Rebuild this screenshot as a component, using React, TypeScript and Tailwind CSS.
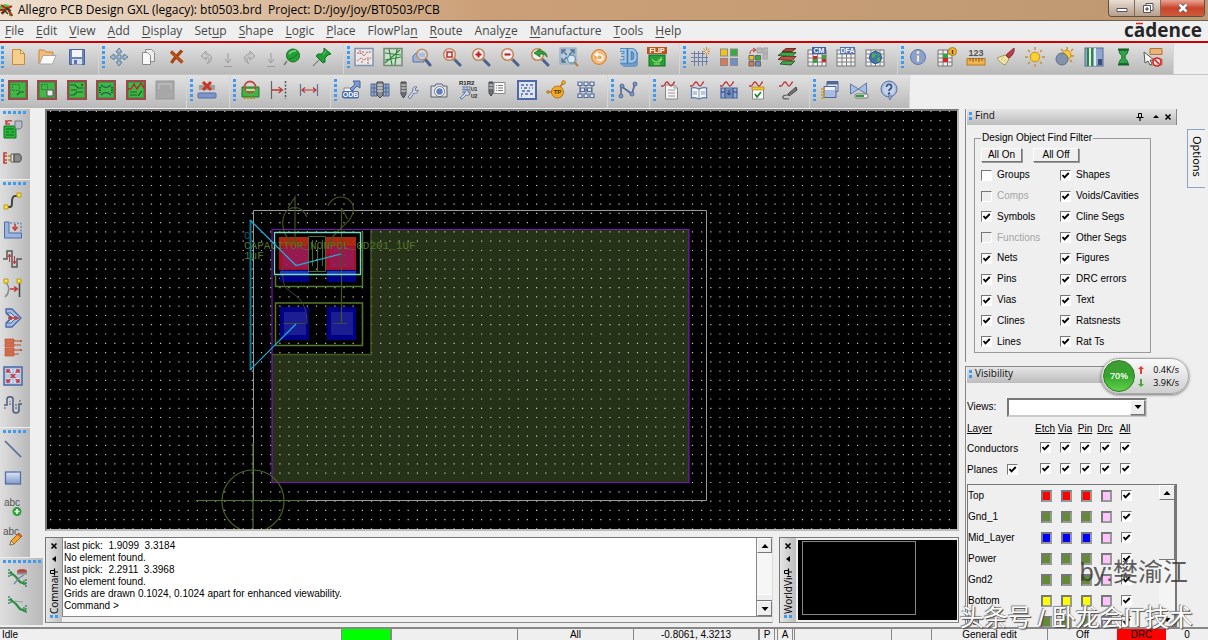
import React from 'react';

type Kids = { children?: React.ReactNode };

const Svg = ({ children }: Kids) => (
  <svg viewBox="0 0 20 20" className="size-5 shrink-0" fill="none" aria-hidden="true">
    {children}
  </svg>
);

/* ---------- shared icon parts ---------- */

const Board = ({ children }: Kids) => (
  <Svg>
    <rect x="1" y="1" width="18" height="18" fill="#44b649" stroke="#9a4a4a" strokeWidth="2" />
    <rect x="2.5" y="2.5" width="15" height="15" stroke="#2e8b34" strokeWidth=".6" />
    {children}
  </Svg>
);

const Lens = ({ children }: Kids) => (
  <Svg>
    <path d="M12 12l6 6" stroke="#4a6292" strokeWidth="3" strokeLinecap="round" />
    <path d="M11 11l2 2" stroke="#c07838" strokeWidth="2" />
    <circle cx="7.5" cy="7.5" r="5.8" fill="#eceff4" stroke="#c58a5c" strokeWidth="1.6" />
    {children}
  </Svg>
);

const Sheet = ({ children }: Kids) => (
  <Svg>
    <rect x="1" y="3" width="18" height="16" fill="#f2f2f2" stroke="#777" />
    <path d="M1 7h18M1 11h18M1 15h18M6 3v16M10.500 3v16M15 3v16" stroke="#808080" />
    {children}
  </Svg>
);

const Wave = ({ children }: Kids) => (
  <Svg>
    {children}
    <path d="M1 6h2c2 0 2-4 4-4s2 4 4 4 2-4 4-4" stroke="#bb3a3a" strokeWidth="1.3" />
  </Svg>
);

const icons: Record<string, React.ReactNode> = {
  New: (
    <Svg>
      <path d="M4.500 2.500h8l4 4v11h-12z" fill="#f6cf8e" stroke="#c88a3c" />
      <path d="M12.500 2.500v4h4z" fill="#fff1d0" stroke="#c88a3c" />
    </Svg>
  ),
  Open: (
    <Svg>
      <path d="M2 17V3h5l2 2h7v4" fill="#f3bb76" stroke="#c98540" />
      <path d="M2.500 17L6 8.500h13L15.500 17z" fill="#fafafa" stroke="#a8a8a8" />
    </Svg>
  ),
  Save: (
    <Svg>
      <path d="M2.500 2.500h15v15h-15z" fill="#6a84bd" stroke="#4c6398" />
      <rect x="5" y="3" width="10" height="7" fill="#f4f4f4" />
      <rect x="5" y="12" width="10" height="5.500" fill="#d8dde8" />
      <path d="M7 13h3v4H7z" fill="#5a72a8" />
    </Svg>
  ),
  Move: (
    <Svg>
      <path d="M10 1l3 4h-2v4h4V7l4 3-4 3v-2h-4v4h2l-3 4-3-4h2v-4H5v2l-4-3 4-3v2h4V5H7z" fill="#a9bfd3" stroke="#60809d" />
    </Svg>
  ),
  Copy: (
    <Svg>
      <path d="M7.500 2.500h6l3 3v9h-9z" fill="#eee" stroke="#8a8a8a" />
      <path d="M4.500 5.500h5l3 3v9h-8z" fill="#f8f8f8" stroke="#8a8a8a" />
    </Svg>
  ),
  Delete: (
    <Svg>
      <path d="M4 4.500c3 3 8 8 11.500 11M15 3.500C12 7 7 11 4.500 16" stroke="#a84411" strokeWidth="3.200" />
      <path d="M4.500 5c3 3 7 7 10.500 10" stroke="#d8682a" />
    </Svg>
  ),
  Undo: (
    <Svg>
      <path d="M9 4L4 9l5 4v-2.500c4 0 4 3 1 6 6-2 6-9.500-1-9.500z" fill="#c9c9c9" stroke="#9b9b9b" />
    </Svg>
  ),
  Redo: (
    <Svg>
      <path d="M11 4l5 5-5 4v-2.500c-4 0-4 3-1 6-6-2-6-9.500 1-9.500z" fill="#c9c9c9" stroke="#9b9b9b" />
    </Svg>
  ),
  Step: (
    <svg viewBox="0 0 10 20" className="h-5 w-[10px] shrink-0" fill="none" aria-hidden="true">
      <path d="M5 6v9M2 12l3 4 3-4M1 19.500h8" stroke="#9d9d9d" />
    </svg>
  ),
  Ball: (
    <Svg>
      <path d="M5 14l-3 4" stroke="#777" strokeWidth="1.500" />
      <circle cx="11" cy="8.500" r="6.500" fill="#23a036" stroke="#166f24" />
      <path d="M7 7c2-3 5-3 7-3.500" stroke="#7fd485" strokeWidth="1.600" />
      <path d="M6.500 12c4 0 6-2 9-5" stroke="#157322" />
    </Svg>
  ),
  Pin: (
    <Svg>
      <path d="M7 13l-6 6" stroke="#8a8a8a" strokeWidth="1.500" />
      <path d="M12 1l7 6-3 1-3 3 0 4-2 1-7-7 2-2h4l2-3z" fill="#1fa037" stroke="#12701f" />
      <path d="M11 8l3-4" stroke="#7ad387" />
    </Svg>
  ),
  Ratsnest: (
    <Svg>
      <rect x="1" y="1.500" width="18" height="17" fill="#e9e9e9" stroke="#8393ad" strokeWidth="1.500" />
      <path d="M3 6h4l3 3 3-4h4M3 14l4-3 3 2 3-2h4M6 3v4M14 12v5M9 4v3M8 14v3" stroke="#b95454" strokeDasharray="2 1" />
    </Svg>
  ),
  Unrats: (
    <Svg>
      <rect x="1" y="1.500" width="18" height="17" fill="#cfdccf" stroke="#768a76" strokeWidth="1.500" />
      <path d="M2 6l16 2M2 13l16-3M6 2l3 16M14 2l-2 16M2 16l15-13" stroke="#2d8c3a" strokeWidth="1.200" />
    </Svg>
  ),
  ZoomWindow: (
    <Svg>
      <path d="M13 12l5 6" stroke="#4a6292" strokeWidth="3" strokeLinecap="round" />
      <path d="M1 15V9l3-3h8v9z" fill="#9db4da" stroke="#56729f" />
      <circle cx="10" cy="7.500" r="5.300" fill="#cfdaec" fillOpacity=".9" stroke="#c58a5c" strokeWidth="1.500" />
      <path d="M7 6h6v4H7z" fill="#a9bfe2" />
    </Svg>
  ),
  ZoomFit: (
    <Lens>
      <rect x="5" y="5" width="5" height="5" stroke="#c22b2b" strokeWidth="1.500" />
    </Lens>
  ),
  ZoomIn: (
    <Lens>
      <path d="M4.500 7.500h6M7.500 4.500v6" stroke="#c4161c" strokeWidth="2" />
    </Lens>
  ),
  ZoomOut: (
    <Lens>
      <path d="M4.500 7.500h6" stroke="#c4161c" strokeWidth="2" />
    </Lens>
  ),
  ZoomPrevious: (
    <Lens>
      <path d="M4 6l6-4v2c4 0 7 2 7 6-2-3-4-3-7-3v3z" fill="#2fa23b" stroke="#1a7425" strokeWidth=".8" />
    </Lens>
  ),
  ZoomArea: (
    <Svg>
      <rect x="1" y="1" width="16" height="16" fill="#b9cad8" stroke="#8da5ba" />
      <path d="M3 3l5 5M15 3l-5 5M3 15l5-5M3 7V3h4M11 3h4v4M3 11v4h4" stroke="#4e7397" strokeWidth="1.400" />
      <path d="M15 15l4 4" stroke="#c07838" strokeWidth="2" />
      <circle cx="12.500" cy="12" r="4" fill="#dbe8f2" stroke="#6b94b5" strokeWidth="1.300" />
    </Svg>
  ),
  Refresh: (
    <Svg>
      <circle cx="10" cy="10" r="7.500" fill="#f3a85a" stroke="#d8873b" />
      <circle cx="10" cy="10" r="5.500" stroke="#fbe0bd" strokeWidth=".8" />
      <path d="M8 7.500h3.500a3 3 0 1 1-3.500 4" stroke="#fff" strokeWidth="1.800" />
      <path d="M9 4.500v6L5 7.500z" fill="#fff" />
    </Svg>
  ),
  View3D: (
    <Svg>
      <path d="M16 2l4 4v12l-2 2H6l-4-3z" fill="#6f9cc6" />
      <path d="M2 3h5.500v5H3M7.500 8v6.500H2M11.500 3v11.500h2c3 0 4-2.500 4-5.500s-1-6-4-6z" stroke="#467aab" strokeWidth="4" />
      <path d="M2 3h5.500v5H3M7.500 8v6.500H2M11.500 3v11.500h2c3 0 4-2.500 4-5.500s-1-6-4-6z" stroke="#a3c7e8" strokeWidth="2.400" />
    </Svg>
  ),
  Flip: (
    <Svg>
      <rect x="2" y="8" width="16" height="11" fill="#23a336" stroke="#176b22" />
      <path d="M5 12c2 4 8 4 10 0M14 10v3h-3M7 17h6" stroke="#c4e08b" />
      <rect x="0" y="0" width="20" height="7" fill="#b9541a" />
      <text x="10" y="6" fontSize="7" fontWeight="700" textAnchor="middle" fill="#fff" fontFamily="Liberation Sans, sans-serif">FLIP</text>
    </Svg>
  ),
  Grid: (
    <Svg>
      <path d="M1 6.500h14M1 10.500h17M1 14.500h17M4.500 4v15M8.500 4v15M12.500 4v15M16.500 9v9" stroke="#6a7fae" />
      <path d="M16.500 0v3M16.500 6v3M12 4.500h3M18 4.500h2M13.500 1.500l2 2M19.500 1.500l-2 2M13.500 7.500l2-2M19.500 7.500l-2-2" stroke="#cc8a2c" />
    </Svg>
  ),
  Colors: (
    <Svg>
      <rect x="1.500" y="2" width="7" height="7" fill="#f1c515" stroke="#8a8a8a" />
      <rect x="11.500" y="2" width="7" height="7" fill="#35ae3e" stroke="#8a8a8a" />
      <rect x="1.500" y="11.500" width="7" height="7" fill="#d87a54" stroke="#8a8a8a" />
      <rect x="11.500" y="11.500" width="7" height="7" fill="#6f8fc6" stroke="#8a8a8a" />
    </Svg>
  ),
  Shadow: (
    <Svg>
      <path d="M9 1h5v5H9zM15 1h5v5h-5zM15 7h5v5h-5z" fill="#b7b7b7" stroke="#a2a2a2" />
      <path d="M2 7c0-4 2-4 5-4M5 1l3 2-3 2" stroke="#c22b2b" />
      <path d="M1 8.500h5v4.500H1z" fill="#f1c515" stroke="#666" />
      <path d="M7.500 8.500h5v4.500h-5z" fill="#35ae3e" stroke="#666" />
      <path d="M1 14.500h5V19H1z" fill="#d87a54" stroke="#666" />
      <path d="M7.500 14.500h5V19h-5z" fill="#6f8fc6" stroke="#666" />
    </Svg>
  ),
  Layers: (
    <Svg>
      <path d="M3 17l3-3h12l-4 4z" fill="#3fa648" stroke="#2c5d30" />
      <path d="M1 12.500l4-3h14l-4 4z" fill="#c65142" stroke="#713027" />
      <path d="M1 8.500l4-3h14l-4 4z" fill="#3fa648" stroke="#2c5d30" />
      <path d="M5 4.500l4-3h10l-4 3z" fill="#a84637" stroke="#713027" />
    </Svg>
  ),
  Constraints: (
    <Sheet>
      <path d="M5 0h14v7H5z" fill="#3f61a0" />
      <path d="M6 9h4v3H6zM15 12h4v3h-4z" fill="#d9252a" />
      <path d="M6 12h4v4H6zM15 8h4v4h-4z" fill="#33a53f" />
      <text x="12" y="6" fontSize="7" fontWeight="700" textAnchor="middle" fill="#fff" fontFamily="Liberation Sans, sans-serif">CM</text>
    </Sheet>
  ),
  Dfa: (
    <Sheet>
      <path d="M4 0h15v7H4z" fill="#5271a9" />
      <text x="11.500" y="6" fontSize="7" fontWeight="700" textAnchor="middle" fill="#fff" fontFamily="Liberation Sans, sans-serif">DFA</text>
    </Sheet>
  ),
  Web: (
    <Sheet>
      <circle cx="10.500" cy="10.500" r="6" fill="#4474b0" stroke="#2e5486" />
      <path d="M7 6l4 1-1 3-3 1zM12 11l3-1v4l-3 1zM12 6l3 2-2 1z" fill="#49b34c" />
    </Sheet>
  ),
  Info: (
    <Svg>
      <circle cx="10" cy="10" r="7.500" fill="#8ba0cf" stroke="#6078ac" />
      <path d="M10 8.500v6" stroke="#f8efb5" strokeWidth="2.200" />
      <circle cx="10" cy="5.500" r="1.400" fill="#f8efb5" />
    </Svg>
  ),
  SheetInfo: (
    <Svg>
      <path d="M1 3h14v16H1z" fill="#eee" stroke="#777" />
      <path d="M1 7h14M1 11h14M1 15h14M6 3v16M10.500 3v16" stroke="#777" />
      <path d="M6 7h5v4H6z" fill="#33a53f" />
      <path d="M6 11h5v4H6z" fill="#d9252a" />
      <circle cx="15.500" cy="4.500" r="4" fill="#f2b52a" stroke="#b27a12" />
      <path d="M15.500 3v4" stroke="#573b06" strokeWidth="1.400" />
    </Svg>
  ),
  Measure: (
    <Svg>
      <text x="10" y="9" fontSize="9" fontWeight="700" textAnchor="middle" fill="#555" fontFamily="Liberation Sans, sans-serif">123</text>
      <rect x="1" y="11.500" width="18" height="6.500" fill="#f0b34f" stroke="#b87b25" />
      <path d="M4 11v3M7 11v4M10 11v3M13 11v4M16 11v3" stroke="#8a5a17" />
    </Svg>
  ),
  Brush: (
    <Svg>
      <path d="M18 1l-8 7 3 3c3-2 6-6 5-10z" fill="#c23a4c" stroke="#8f2836" />
      <path d="M9 8l4 4-4 6c-3-1-6-4-8-7z" fill="#f3e9ae" stroke="#a59457" />
      <path d="M5 13l3-3M7 15l3-3" stroke="#c9b873" />
    </Svg>
  ),
  Sun: (
    <Svg>
      <path d="M10 0v3M10 17v3M0 10h3M17 10h3M3 3l2 2M15 15l2 2M17 3l-2 2M5 15l-2 2" stroke="#c98a3a" strokeWidth="1.300" />
      <circle cx="10" cy="10" r="4.800" fill="#fbd12f" stroke="#cf8a1d" />
    </Svg>
  ),
  Dim: (
    <Svg>
      <path d="M13 0v3M19 2l-2 2M20 9h-3M7 2l2 2M18 15l-2-2" stroke="#d48a1f" strokeWidth="1.500" />
      <circle cx="12.500" cy="8" r="4.500" fill="#fbd12f" stroke="#cf8a1d" />
      <circle cx="8" cy="12" r="6" fill="#8393ab" stroke="#5f708b" />
    </Svg>
  ),
  Panels: (
    <Svg>
      <rect x="1" y="1" width="18" height="18" fill="#8fa6cf" stroke="#566c96" />
      <path d="M4 1v18M8 1v18" stroke="#2c8b3a" strokeWidth="2" />
      <path d="M6 1v18M11 1v18" stroke="#fff" strokeWidth="1.500" />
      <path d="M14 12h4v6h-4z" fill="#3a4f7a" />
    </Svg>
  ),
  Hourglass: (
    <Svg>
      <path d="M5 2.500h11M5 17.500h11" stroke="#185f28" strokeWidth="2" />
      <path d="M6 3.500h9c0 4-3 4-3 6.500s3 3 3 6.500H6c0-3.500 3-4 3-6.500S6 7.500 6 3.500z" fill="#2fa349" stroke="#19702c" />
    </Svg>
  ),
  NoSelect: (
    <Svg>
      <path d="M7 1.500h12v6H7zM7 12h12v6H7z" fill="#e9b277" stroke="#b1763a" />
      <path d="M1 5l1 11 3-2 2 4 2-1-2-4h4z" fill="#fff" stroke="#555" />
      <circle cx="14" cy="15" r="4" fill="#f7dede" stroke="#d9252a" strokeWidth="1.600" />
      <path d="M11.500 12.500l5 5" stroke="#d9252a" strokeWidth="1.600" />
    </Svg>
  ),
  Etch: (
    <Board>
      <rect x="4.500" y="4.500" width="7" height="6" stroke="#1d7a28" strokeDasharray="1.500 1" />
      <path d="M9 15l3-3h4" stroke="#14601e" strokeWidth="1.200" />
    </Board>
  ),
  Placement: (
    <Board>
      <rect x="4.500" y="4.500" width="6" height="5" stroke="#1d7a28" strokeDasharray="1.500 1" />
      <path d="M10 10h6v6h-6z" fill="#e8e8f0" stroke="#555" />
    </Board>
  ),
  Routes: (
    <Board>
      <path d="M3 5h5l3 3h5M4 10h6M3 15h4l3-3h6" stroke="#14601e" strokeWidth="1.200" />
      <circle cx="15" cy="5" r="1" fill="#14501a" />
    </Board>
  ),
  Swap: (
    <Board>
      <path d="M5 5c3 3 7 3 10 0M5 15c3-3 7-3 10 0" stroke="#1d5f5a" strokeWidth="1.300" />
      <path d="M4 7v6M16 7v6" stroke="#14601e" strokeWidth="2" strokeDasharray="1.500 1" />
    </Board>
  ),
  Signal: (
    <Board>
      <path d="M2 9l3 0 3-5 3 5 4-6 3 5" stroke="#b22a2a" strokeWidth="1.400" />
      <path d="M4 12h7M4 15h7M12 16l3-4 1-1" stroke="#14601e" strokeWidth="1.200" />
    </Board>
  ),
  Blank: (
    <Svg>
      <rect x="1" y="1" width="18" height="18" fill="#a7a7a7" stroke="#999" />
      <path d="M4 9V4h12v5" stroke="#bdbdbd" strokeWidth="1.300" />
    </Svg>
  ),
  Unplace: (
    <Svg>
      <path d="M2 5h16v5H2z" fill="#9f9f9f" />
      <path d="M6 2l8 8M14 2l-8 8" stroke="#c83526" strokeWidth="3" />
      <rect x="1" y="13" width="18" height="5" rx="1" fill="#7d95ca" stroke="#556da3" />
    </Svg>
  ),
  Outline: (
    <Svg>
      <path d="M2 7h17v10H2z" fill="#3db443" stroke="#25752b" />
      <path d="M5 17v2M8 17v2M11 17v2M14 17v2" stroke="#b38c23" strokeWidth="2" />
      <circle cx="10" cy="7" r="5.500" stroke="#c04b41" strokeWidth="1.800" />
      <path d="M6 10h9" stroke="#ecefb5" strokeWidth="1.500" />
    </Svg>
  ),
  AlignTo: (
    <Svg>
      <path d="M2.500 1v18" stroke="#666" strokeWidth="1.200" />
      <path d="M16.500 1v18" stroke="#555" strokeDasharray="2 1.500" strokeWidth="1.500" />
      <path d="M3 10h9M9.500 7l4 3-4 3" stroke="#bf3530" strokeWidth="1.300" />
    </Svg>
  ),
  Dimension: (
    <Svg>
      <path d="M1.500 4v12M18.500 4v12" stroke="#62769c" strokeWidth="1.300" />
      <path d="M3 10h14M6 7.500L3 10l3 2.500M14 7.500l3 2.500-3 2.500" stroke="#bf3530" strokeWidth="1.200" />
    </Svg>
  ),
  Odb: (
    <Svg>
      <path d="M3 8h9v7H3z" fill="#f4f4f4" stroke="#888" />
      <path d="M9 9l5-5-2-3h7v7l-3-2-5 5z" fill="#7d9bd0" stroke="#4a6596" />
      <rect x="1" y="11" width="17" height="7.500" rx="2" fill="#486bab" />
      <text x="9.500" y="17.200" fontSize="7" fontWeight="700" textAnchor="middle" fill="#fff" fontFamily="Liberation Sans, sans-serif">ODB</text>
    </Svg>
  ),
  Table: (
    <Svg>
      <path d="M1 4h6v12H1zM13 4h6v12h-6z" fill="#93a9d2" stroke="#52698f" />
      <path d="M1 8h18M1 12h18M4 4v12M16 4v12" stroke="#52698f" />
      <path d="M7 2h6v13l-3 3-3-3z" fill="#8a8f97" stroke="#444" />
      <path d="M7 5h6M7 8h6M7 11h6" stroke="#ddd" />
    </Svg>
  ),
  DrillTool: (
    <Svg>
      <path d="M2 2h5v12l-2.500 4L2 14z" fill="#6b7078" stroke="#444" />
      <path d="M2 5h5M2 8h5M2 11h5" stroke="#ddd" />
      <path d="M9 17l5-6c-1-3 1-5 4-4l-2 2 1 2 2-1c0 3-2 4-4 3l-4 6z" fill="#d5dce8" stroke="#67799c" />
    </Svg>
  ),
  Camera: (
    <Svg>
      <path d="M2 6h4l1-2h6l1 2h4v11H2z" fill="#dcdfe6" stroke="#5a5f6b" />
      <circle cx="10.500" cy="11.500" r="4" fill="#5f7fb6" stroke="#fff" strokeWidth="1.500" />
      <circle cx="10.500" cy="11.500" r="5" stroke="#555" strokeWidth=".7" />
    </Svg>
  ),
  Rename: (
    <Svg>
      <path d="M4 7h8M4 9.500h8M4 12h8M6 6v8M9 6v8M12 6v8" stroke="#7087b5" />
      <path d="M2 18l5-5c0-2 1-3 3-3v2l2 2c-1 2-3 1-4 1l-4 4z" fill="#d5dce8" stroke="#67799c" />
      <text x="1" y="5" fontSize="6" fontWeight="700" fill="#222" fontFamily="Liberation Sans, sans-serif">R1R2</text>
      <text x="13" y="11" fontSize="5" fontWeight="700" fill="#222" fontFamily="Liberation Sans, sans-serif">U1</text>
      <text x="13" y="18" fontSize="5" fontWeight="700" fill="#222" fontFamily="Liberation Sans, sans-serif">U2</text>
    </Svg>
  ),
  DrillList: (
    <Svg>
      <path d="M2 2h4v11l-2 3-2-3z" fill="#6b7078" stroke="#444" />
      <path d="M2 5h4M2 8h4" stroke="#ddd" />
      <path d="M7 2.500h11v11H7z" fill="#fafafa" stroke="#888" />
      <path d="M9 5.500h1M11 5.500h5M9 8h1M11 8h5M9 10.500h1M11 10.500h5" stroke="#777" />
    </Svg>
  ),
  Pattern: (
    <Svg>
      <rect x="1" y="1" width="18" height="18" fill="#dfe5f1" stroke="#4e69a6" strokeWidth="2" />
      <path d="M4 5h3M9 5h2M13 5h3M4 8h1M7 8h3M12 8h1M15 8h1M5 11h3M10 11h3M4 14h2M8 14h3M13 14h3M4 16h1" stroke="#4e69a6" strokeWidth="1.600" />
    </Svg>
  ),
  TestPoint: (
    <Svg>
      <path d="M1 12h5M14 7l3-4" stroke="#ae7719" strokeWidth="1.500" />
      <circle cx="17.500" cy="2.500" r="1.800" fill="#f5b62c" stroke="#ae7719" />
      <circle cx="2" cy="12" r="1.300" fill="#f5b62c" stroke="#ae7719" />
      <circle cx="11.500" cy="12" r="6" fill="#f2a92b" stroke="#b37416" />
      <text x="11.500" y="14" fontSize="6" fontWeight="700" textAnchor="middle" fill="#4d3000" fontFamily="Liberation Sans, sans-serif">TP</text>
    </Svg>
  ),
  Array: (
    <Svg>
      <path d="M4 4v12M10 4v12M16 4v12M4 10h12" stroke="#556c99" />
      <path d="M2 2h4v3.500H2zM8 2h4v3.500H8zM14 2h4v3.500h-4zM4.500 8h4v3.500h-4zM11.500 8h4v3.500h-4zM2 14h4v3.500H2zM8 14h4v3.500H8zM14 14h4v3.500h-4z" fill="#e4e9f3" stroke="#556c99" strokeWidth="1.200" />
    </Svg>
  ),
  Net: (
    <Svg>
      <path d="M3 16V6l11 8 3-11" stroke="#566c98" strokeWidth="1.700" />
      <circle cx="3" cy="16" r="2" fill="#7e97c6" stroke="#566c98" />
      <circle cx="4" cy="6" r="2" fill="#7e97c6" stroke="#566c98" />
      <circle cx="14" cy="14" r="2" fill="#7e97c6" stroke="#566c98" />
      <circle cx="17" cy="4" r="2" fill="#7e97c6" stroke="#566c98" />
    </Svg>
  ),
  WavePage: (
    <Wave>
      <path d="M5.500 5h9l3 3v11h-12z" fill="#f3f3f3" stroke="#888" />
      <path d="M8 10h7M8 13h7M8 16h7M14 5v3h3" stroke="#999" />
    </Wave>
  ),
  WaveBook: (
    <Wave>
      <path d="M2.500 8c3-1 5 0 7.500 1 2.500-1 5-2 7.500-1v10c-3-1-5 0-7.500 1-2.500-1-5-2-7.500-1z" fill="#f7f9fd" stroke="#5c78ad" strokeWidth="1.300" />
      <path d="M10 9v10M12 12h4M12 14h4M4 12h4M4 14h4" stroke="#5c78ad" strokeWidth=".8" />
    </Wave>
  ),
  WaveCase: (
    <Wave>
      <path d="M2 8h16v10H2z" fill="#93aad6" stroke="#46619a" strokeWidth="1.200" />
      <path d="M7 9h6v8H7z" fill="#7089bd" />
      <path d="M10 10v5M8 13l2 2 2-2M2 12h4M14 12h4M6 8v10M14 8v10" stroke="#274074" />
    </Wave>
  ),
  WaveNote: (
    <Wave>
      <path d="M4.500 8h11v11h-11z" fill="#fff" stroke="#888" />
      <path d="M4 7h12v3H4z" fill="#f2c52f" stroke="#a9811a" strokeWidth=".7" />
      <path d="M7 14l2 3 4-5" stroke="#1f8a30" strokeWidth="1.700" />
    </Wave>
  ),
  WaveProbe: (
    <Wave>
      <path d="M18 7l-8 7 1 2 8-6z" fill="#777" stroke="#444" />
      <path d="M10 15c-4 0-6 1-5 3s4 0 6 1" stroke="#555" strokeWidth="1.200" />
    </Wave>
  ),
  Windows: (
    <Svg>
      <path d="M7 1.500h11v10H7z" fill="#dfe7f5" stroke="#4e6799" />
      <path d="M7 1.500h11v3H7z" fill="#4e6799" />
      <path d="M4 6.500h12v11H4z" fill="#a8bcdf" stroke="#4e6799" />
      <path d="M5 7h10v3H5z" fill="#eef2f9" />
      <path d="M1 9h4M1 12h4M1 15h4M1 18h4" stroke="#c9a022" strokeWidth="1.500" />
    </Svg>
  ),
  Mirror: (
    <Svg>
      <path d="M1.500 4v10l8-5zM17.500 3v11l-8-5z" fill="#a9bfe2" stroke="#5c78ad" />
      <rect x="6" y="14" width="13" height="4" rx="1" fill="#eee" stroke="#777" />
      <path d="M7 16h8" stroke="#2da53d" strokeWidth="2" />
    </Svg>
  ),
  Help: (
    <Svg>
      <circle cx="10" cy="9" r="8" fill="#aabbdc" stroke="#5f77a8" />
      <path d="M9 16h4l-2 4z" fill="#aabbdc" stroke="#5f77a8" />
      <circle cx="10" cy="9" r="6" fill="#c7d3ea" />
      <path d="M7.500 7c0-4 5.500-3 5 0 0 2-2.500 2-2.500 4" stroke="#3b5484" strokeWidth="1.800" />
      <circle cx="10" cy="13.500" r="1.200" fill="#3b5484" />
    </Svg>
  ),
  PlaceBoard: (
    <Svg>
      <path d="M1 7h12v12H1z" fill="#27b638" stroke="#13742c" />
      <path d="M3 10h8M3 13h3M8 13h3M3 16h8" stroke="#0f6b1f" />
      <path d="M3 5c0-3 3-4 6-3M3 1v4h4" stroke="#c04040" strokeWidth="1.400" />
      <path d="M12 2h7v6l-2 2h-4l-1-2z" fill="#b5bcc8" stroke="#6e7683" />
    </Svg>
  ),
  Plug: (
    <Svg>
      <path d="M4 5H1v10h3M1 8h3M1 12h3" stroke="#c2403d" strokeWidth="1.600" />
      <path d="M5 8h5M5 12h5" stroke="#c7a31c" strokeWidth="2" />
      <path d="M8 6h3v8H8z" fill="#ddd" stroke="#666" />
      <path d="M11 6h5c3 0 3 8 0 8h-5z" fill="#8a8a8a" stroke="#444" />
    </Svg>
  ),
  Connect: (
    <Svg>
      <path d="M4 16h3c2 0 2-2 2-5s0-6 3-6h3" stroke="#454545" strokeWidth="2" />
      <path d="M1 14h4v4H1zM14 2h4v4h-4z" fill="#ffe23c" stroke="#b79b14" />
    </Svg>
  ),
  Slide: (
    <Svg>
      <path d="M1.500 2v16h17v-5H6V2z" fill="#9cb4dd" stroke="#4e6ca6" />
      <path d="M7 3h11v9" stroke="#4e6ca6" strokeDasharray="2 1.500" />
      <path d="M12 4v4M9.500 7l2.500 3 2.500-3" stroke="#c23434" strokeWidth="1.500" />
    </Svg>
  ),
  Delay: (
    <Svg>
      <path d="M0 10h4V2h5v16h5v-8h5" stroke="#585858" strokeWidth="1.500" />
      <path d="M6.500 13V6M5 8l1.500-3L8 8M11.500 7v7M10 12l1.500 3 1.500-3" stroke="#c23434" />
    </Svg>
  ),
  Vertex: (
    <Svg>
      <path d="M2 4c5 4 5 10 0 15" stroke="#888" strokeWidth="1.500" />
      <path d="M16.500 4v15" stroke="#444" strokeWidth="1.500" />
      <path d="M1 1h4v4H1zM14 1h4v4h-4z" fill="#ffe23c" stroke="#b79b14" />
      <path d="M7 11h6M11 8.500l3.500 2.500-3.500 2.500" stroke="#c23434" strokeWidth="1.400" />
    </Svg>
  ),
  Miter: (
    <Svg>
      <path d="M3 1h6l9 9-9 9H3v-4l5-5-5-5z" fill="#a4bade" stroke="#486aa9" strokeWidth="1.300" />
      <path d="M4 5h4l5 5-5 5H4l5-5z" fill="#d3d3d3" stroke="#486aa9" />
      <path d="M5 10h11M8 8v4M13 8v4" stroke="#c23434" strokeWidth="1.400" />
    </Svg>
  ),
  Fanout: (
    <Svg>
      <path d="M2 2h9v3.500H2zM2 6.500h9V10H2zM2 11h9v3.500H2zM2 15.500h9V19H2z" fill="#d96b47" stroke="#b74a2c" strokeWidth=".6" />
      <path d="M11 4h7M11 8h7M11 13h7M11 17h5" stroke="#b74a2c" strokeWidth="1.200" />
      <circle cx="18" cy="4" r="1" fill="#b74a2c" />
      <circle cx="18" cy="13" r="1" fill="#b74a2c" />
    </Svg>
  ),
  Expand: (
    <Svg>
      <rect x="1" y="1" width="18" height="18" fill="#b6c6e2" stroke="#4f6da8" strokeWidth="1.600" />
      <path d="M4 4l12 12M16 4L4 16" stroke="#c23434" strokeWidth="1.500" />
      <path d="M3.500 3.500h5v4h-5zM11.500 3.500h5v4h-5zM3.500 12.500h5v4h-5zM11.500 12.500h5v4h-5z" stroke="#d6e0f1" />
      <path d="M4 7V4h3M13 4h3v3M4 13v3h3M16 13v3h-3" stroke="#c23434" strokeWidth="1.400" />
    </Svg>
  ),
  Tune: (
    <Svg>
      <path d="M1 10h3V4c0-3 6-3 6 0v11c0 4 6 4 6 0V9h3" stroke="#4c5c7c" strokeWidth="1.500" />
      <path d="M7 10V6M13 9v6M1 13h3M16 6h3" stroke="#4c5c7c" strokeDasharray="2 1" />
    </Svg>
  ),
  Line: (
    <Svg>
      <path d="M2 2l16 16" stroke="#5a6c8f" strokeWidth="1.700" />
    </Svg>
  ),
  Rect: (
    <Svg>
      <defs>
        <linearGradient id="rectFill" x1="0" y1="0" x2="0" y2="1">
          <stop offset="0" stopColor="#dbe5f5" />
          <stop offset="1" stopColor="#8199c8" />
        </linearGradient>
      </defs>
      <rect x="2.500" y="4" width="15" height="12" fill="url(#rectFill)" stroke="#5571a9" strokeWidth="1.300" />
    </Svg>
  ),
  AddText: (
    <Svg>
      <text x="1" y="9" fontSize="10" fill="#555" fontFamily="Liberation Sans, sans-serif">abc</text>
      <circle cx="14" cy="14.500" r="4.500" fill="#2aa335" />
      <path d="M11.500 14.500h5M14 12v5" stroke="#fff" strokeWidth="1.600" />
    </Svg>
  ),
  EditText: (
    <Svg>
      <text x="0" y="9" fontSize="10" fill="#555" fontFamily="Liberation Sans, sans-serif">abc</text>
      <path d="M7 19l1-4 8-8 3 3-8 8z" fill="#f5a62d" stroke="#a96918" />
      <path d="M7 19l1-4 3 3z" fill="#f7e1b8" stroke="#666" strokeWidth=".7" />
      <path d="M15 8l3 3" stroke="#c4443f" strokeWidth="1.500" />
    </Svg>
  ),
  RouteStop: (
    <svg viewBox="0 0 26 20" className="h-5 w-[26px] shrink-0" fill="none" aria-hidden="true">
      <path d="M6 1v9M8 3v5M23 11v8M21 12v6" stroke="#3f8a6d" strokeWidth="1.500" strokeDasharray="2 1" />
      <path d="M7 4l6 5 4 5 6 2" stroke="#2c8d3d" strokeWidth="2.200" />
      <path d="M11 16l5-6 5-3" stroke="#6b86a8" strokeWidth="1.300" />
      <ellipse cx="19" cy="3.500" rx="5" ry="2.500" fill="#b14a44" />
      <path d="M14 5.500h10" stroke="#8d8d8d" strokeWidth="2" />
    </svg>
  ),
  RouteGo: (
    <svg viewBox="0 0 26 20" className="h-5 w-[26px] shrink-0" fill="none" aria-hidden="true">
      <path d="M6 1v9M8 3v5M23 10v9M21 12v6" stroke="#3f8a6d" strokeWidth="1.500" strokeDasharray="2 1" />
      <path d="M7 4l6 5 4 5 6 2" stroke="#2c8d3d" strokeWidth="2.200" />
      <path d="M12 6l8 1" stroke="#8aa0b8" />
    </svg>
  ),
};

type Group = { width: string; bar: string; items: string[] };

const row1: Group[] = [
  { width: 'w-[99px]', bar: 'w-[88px]', items: ['New', 'Open', 'Save'] },
  { width: 'w-[245px]', bar: 'w-[232px]', items: ['Move', 'Copy', 'Delete', 'Undo', 'Step', 'Redo', 'Step', 'Ball', 'Pin'] },
  { width: 'w-[336px]', bar: 'w-[323px]', items: ['Ratsnest', 'Unrats', 'ZoomWindow', 'ZoomFit', 'ZoomIn', 'ZoomOut', 'ZoomPrevious', 'ZoomArea', 'Refresh', 'View3D', 'Flip'] },
  { width: 'w-[218px]', bar: 'w-[205px]', items: ['Grid', 'Colors', 'Shadow', 'Layers', 'Constraints', 'Dfa', 'Web'] },
  { width: 'w-[276px]', bar: 'w-[264px]', items: ['Info', 'SheetInfo', 'Measure', 'Brush', 'Sun', 'Dim', 'Panels', 'Hourglass', 'NoSelect'] },
];

const row2: Group[] = [
  { width: 'w-[187px]', bar: 'w-[177px]', items: ['Etch', 'Placement', 'Routes', 'Swap', 'Signal', 'Blank'] },
  { width: 'w-[43px]', bar: 'w-[29px]', items: ['Unplace'] },
  { width: 'w-[101px]', bar: 'w-[88px]', items: ['Outline', 'AlignTo', 'Dimension'] },
  { width: 'w-[277px]', bar: 'w-[264px]', items: ['Odb', 'Table', 'DrillTool', 'Camera', 'Rename', 'DrillList', 'Pattern', 'TestPoint', 'Array'] },
  { width: 'w-[42px]', bar: 'w-[29px]', items: ['Net'] },
  { width: 'w-[160px]', bar: 'w-[147px]', items: ['WavePage', 'WaveBook', 'WaveCase', 'WaveNote', 'WaveProbe'] },
  { width: 'w-[100px]', bar: 'w-[88px]', items: ['Windows', 'Mirror', 'Help'] },
];

const ToolGroup = ({ group, first }: { group: Group; first: boolean }) => (
  <div className={`${group.width} ${first ? 'pl-px' : 'pl-[3px]'} flex items-center border-r border-[#d6d6d6] bg-linear-to-b from-[#e2e2e2] to-[#b9b9b9] pb-[3px]`}>
    <span className="h-[22px] w-[3px] bg-[repeating-linear-gradient(to_bottom,#3b9bf5_0,#3b9bf5_3px,transparent_3px,transparent_5px)]" />
    <div className={`${group.bar} -ml-px flex justify-between`}>
      {group.items.map((name, i) => (
        <button key={i} type="button" aria-label={name} className={`${name === 'Step' ? 'w-[13px]' : 'w-[29px]'} flex justify-center`}>
          {icons[name]}
        </button>
      ))}
    </div>
  </div>
);

const sideGroups = [
  { size: 'h-[70px] w-[30px]', grip: 'w-[23px]', items: ['PlaceBoard', 'Plug'] },
  { size: 'h-[247px] w-[30px]', grip: 'w-[23px]', items: ['Connect', 'Slide', 'Delay', 'Vertex', 'Miter', 'Fanout', 'Expand', 'Tune'] },
  { size: 'h-[129px] w-[30px]', grip: 'w-[23px]', items: ['Line', 'Rect', 'AddText', 'EditText'] },
  { size: 'h-[67px] w-[43px]', grip: 'w-[38px]', items: ['RouteStop', 'RouteGo'] },
];

const menus: [string, number][] = [
  ['File', 0], ['Edit', 0], ['View', 0], ['Add', 0], ['Display', 0], ['Setup', 3], ['Shape', 0], ['Logic', 0],
  ['Place', 0], ['FlowPlan', 7], ['Route', 0], ['Analyze', 5], ['Manufacture', 0], ['Tools', 0], ['Help', 0],
];

const Check = ({ label, on = true, disabled = false }: { label: string; on?: boolean; disabled?: boolean }) => (
  <span className="relative inline-flex size-[11px] shrink-0">
    <input
      type="checkbox"
      aria-label={label}
      defaultChecked={on}
      disabled={disabled}
      className="peer size-[11px] appearance-none border border-t-[#777] border-r-white border-b-white border-l-[#777] bg-white disabled:bg-[#eee]"
    />
    <svg viewBox="0 0 11 11" className="pointer-events-none absolute inset-0 hidden size-[11px] peer-checked:block" fill="none" aria-hidden="true">
      <path d="M2.500 5l2 2.300L8.800 3" stroke="#000" strokeWidth="1.900" />
    </svg>
  </span>
);

const filters: { name: string; on: boolean; disabled?: boolean }[] = [
  { name: 'Groups', on: false },
  { name: 'Comps', on: false, disabled: true },
  { name: 'Symbols', on: true },
  { name: 'Functions', on: false, disabled: true },
  ...['Nets', 'Pins', 'Vias', 'Clines', 'Lines', 'Shapes', 'Voids/Cavities', 'Cline Segs', 'Other Segs', 'Figures', 'DRC errors', 'Text', 'Ratsnests', 'Rat Ts'].map((name) => ({ name, on: true })),
];

const kinds = ['Etch', 'Via', 'Pin', 'Drc', 'All'];

const layers = [
  { name: 'Top', color: 'bg-[#ff0000]' },
  { name: 'Gnd_1', color: 'bg-[#628b34]' },
  { name: 'Mid_Layer', color: 'bg-[#0000ff]' },
  { name: 'Power', color: 'bg-[#628b34]' },
  { name: 'Gnd2', color: 'bg-[#628b34]' },
  { name: 'Bottom', color: 'bg-[#ffff00]' },
  { name: 'All', color: 'bg-[#628b34]' },
];

const Cols = () => (
  <colgroup>
    <col className="w-[68px]" />
    {kinds.map((k) => (
      <col key={k} className="w-[20px]" />
    ))}
  </colgroup>
);

const gridDots = Array.from({ length: 46 }, (_, r) =>
  Array.from({ length: 100 }, (_, c) => `M${(50 + c * 9.17).toFixed(1)} ${(111.300 + r * 9.28).toFixed(1)}h1.200`).join(''),
).join('');

const Board2D = () => (
  <svg viewBox="47 111 910 418" preserveAspectRatio="xMinYMin slice" className="absolute inset-0 size-full" fill="none" role="img" aria-label="Board layout">
    <path d="M272 229.500h417v253H272z" fill="#263217" />
    <path d="M272 230h99v124h-99z" fill="#000" />
    <path d={gridDots} stroke="#c4c4c4" strokeWidth="1.200" />
    <path d="M253.500 210.500h453v290h-453z" stroke="#9a9a9a" />
    <path d="M371 230v124.500H272" stroke="#41591f" strokeWidth="1.500" />
    <path d="M272 482.500V229.500h417v253z" stroke="#7d0fbd" strokeWidth="1.200" />

    <path d="M275.500 303h87v42.500h-87zM275.500 276v10.500h87V232" stroke="#567a2c" strokeWidth="1.500" />
    <path d="M280 270h29v12h-29zM327 270h29v12h-29zM280 307h29v33h-29zM327 307h29v33h-29z" fill="#000086" />
    <path d="M284 312h22v23h-22zM331 312h22v23h-22z" fill="#1d1d93" />
    <path d="M279 237h30v33h-30zM326 237h30v33h-30z" fill="#a3102a" />
    <path d="M279 237h30v9h-30zM326 237h30v9h-30z" fill="#a82a10" />
    <path d="M283 247h25v21h-25zM330 247h24v21h-24z" fill="#961a50" />
    <path d="M280 271h29v4h-29zM327 271h29v4h-29z" fill="#1a3cb4" />
    <path d="M308.500 236.500h17v35h-17zM312.500 240v26M322.500 240v26M317.500 247v24" stroke="#4c6a28" />
    <path d="M287 246v34M296 246v34M305 246v34M334 246v34M345 246v34" stroke="#c06090" strokeOpacity=".35" strokeDasharray="1 8" />

    <path d="M288 208l7-11v46M307 217c-4-9-11-11-18-8-9 6-7 22-2 28 3 5 7 6 10 8" stroke="#41561f" strokeWidth="1.200" />
    <path d="M328 206c4-12 22-12 25 0 2 10-5 16-12 22-5 5-10 9-11 16M341.500 208v116M341.500 208l6 11" stroke="#41561f" strokeWidth="1.200" />
    <path d="M283 266c-1 8 0 16 2 21 6 6 14 9 18 17 3 6 4 12 4 20M283 323.500h22M333 323.500h14" stroke="#3c4b3a" />
    <text x="244" y="249" fontSize="11" fill="#55752b" fontFamily="Liberation Mono, monospace">CAPACITOR_NONPOL_0D201_1UF</text>
    <text x="244" y="259" fontSize="11" fill="#55752b" fontFamily="Liberation Mono, monospace">1uF</text>
    <text x="244" y="239" fontSize="10" fill="#0b5f70" fontFamily="Liberation Mono, monospace">C</text>

    <path d="M274.500 232.500h86v42h-86z" stroke="#74dcc0" strokeWidth="1.300" />
    <path d="M250.500 220v150" stroke="#08788f" strokeWidth="2" />
    <path d="M250 220l46 45.500 45-11.500M250 370l46-46" stroke="#1fb2dd" strokeWidth="1.200" />

    <path d="M196 500.500h111M253 443v88" stroke="#527629" strokeWidth="1.200" />
    <circle cx="253" cy="501" r="31" stroke="#476522" strokeWidth="1.200" />
  </svg>
);

const PinGlyph = () => (
  <svg viewBox="0 0 8 8" className="size-2" fill="none" aria-hidden="true">
    <path d="M2.500 4V.500h3V4" stroke="#000" />
    <path d="M0.500 4.500h7M4 5v3" stroke="#000" strokeWidth="1.200" />
  </svg>
);

const XGlyph = () => (
  <svg viewBox="0 0 8 8" className="size-2" aria-hidden="true">
    <path d="M1.500 1.500l5 5M6.500 1.500l-5 5" stroke="#000" strokeWidth="1.600" />
  </svg>
);

const Tri = ({ d }: { d: string }) => (
  <svg viewBox="0 0 8 8" className="size-2" aria-hidden="true">
    <path d={d} fill="#000" />
  </svg>
);

const SideStrip = ({ title }: { title: string }) => (
  <div className="flex w-[16px] flex-col items-center gap-[5px] overflow-hidden bg-linear-to-r from-[#e6e6e6] to-[#bdbdbd] pt-[4px] pb-[4px]">
    <button type="button" aria-label="Close"><XGlyph /></button>
    <button type="button" aria-label="Collapse"><Tri d="M6 1v6L2 4z" /></button>
    <button type="button" aria-label="Auto hide" className="-rotate-90"><PinGlyph /></button>
    <span className="-mt-[5px] h-[38px] rotate-180 overflow-hidden font-['Open_Sans',sans-serif] text-[10px] leading-[12px] [writing-mode:vertical-rl]">{title}</span>
    <span className="-mt-[4px] flex gap-[2px]">
      <i className="size-[3px] bg-[#3b9bf5]" />
      <i className="size-[3px] bg-[#3b9bf5]" />
    </span>
  </div>
);

const PanelTitle = ({ title, buttons = false }: { title: string; buttons?: boolean }) => (
  <div className="flex h-[16px] items-center bg-linear-to-b from-[#e6e6e6] to-[#bcbcbc] pr-[4px] pb-[3px] pl-[2px]">
    <span className="mr-[3px] flex flex-col gap-[2px]">
      <i className="size-[3px] bg-[#3b9bf5]" />
      <i className="size-[3px] bg-[#3b9bf5]" />
    </span>
    <h2 className="flex-1 font-['Open_Sans',sans-serif] text-[10px] leading-[13px] text-[#111]">{title}</h2>
    {buttons && (
      <div className="flex gap-[8px] pt-[2px]">
        <button type="button" aria-label="Auto hide"><PinGlyph /></button>
        <button type="button" aria-label="Collapse"><Tri d="M1 5h6L4 2z" /></button>
        <button type="button" aria-label="Close" className="-ml-[4px]"><XGlyph /></button>
      </div>
    )}
  </div>
);

const ScrollButton = ({ up }: { up: boolean }) => (
  <button type="button" aria-label={up ? 'Scroll up' : 'Scroll down'} className="flex h-[15px] w-full shrink-0 items-center justify-center border border-t-white border-r-[#777] border-b-[#777] border-l-white bg-[#eee]">
    <Tri d={up ? 'M0.500 6h7L4 2z' : 'M0.500 2h7L4 6z'} />
  </button>
);

const raised = 'border border-t-white border-l-white border-r-[#777] border-b-[#777] shadow-[1px_1px_0_#999]';

export default function App() {
  return (
    <div className="relative flex h-screen min-h-[640px] flex-col overflow-hidden bg-[#efefef] font-['Liberation_Sans',sans-serif] text-[10px] leading-[12px] text-black">
      {/* Title bar */}
      <header className="flex h-[21px] shrink-0 items-center border-b border-[#6f6152] bg-linear-to-r from-[#eedfce] via-[#cba078] via-40% to-[#be9871]">
        <svg viewBox="0 0 14 14" className="size-[14px]" fill="none" aria-hidden="true">
          <path d="M0 3l5-2 7 2-4 4-8 1zM9 9l4 2v2H9z" fill="#3ed048" />
          <path d="M1 2l6 4 5-3M2 11l5-6 5 8M0 7h6" stroke="#d4161c" strokeWidth="2" />
          <path d="M1 10l4-2 3 3M6 5l5 3" stroke="#184f1c" strokeWidth="1.500" />
        </svg>
        <h1 className="ml-[4px] flex-1 font-['Open_Sans',sans-serif] text-[12px] leading-[20px] whitespace-pre">
          Allegro PCB Design GXL (legacy): bt0503.brd  Project: D:/joy/joy/BT0503/PCB
        </h1>
        <div className="mr-[3px] flex h-[17px] self-start overflow-hidden rounded-b-[4px] border border-t-0 border-[#5d5146]">
          <button type="button" aria-label="Minimize" className="flex w-[26px] items-center justify-center border-r border-[#7d6c5c] bg-linear-to-b from-[#e9ddd3] to-[#b59e8b]">
            <svg viewBox="0 0 12 10" className="h-[10px] w-[12px]" aria-hidden="true"><path d="M1 5.500h10v3H1z" fill="#fff" stroke="#555" /></svg>
          </button>
          <button type="button" aria-label="Restore" className="flex w-[26px] items-center justify-center border-r border-[#7d6c5c] bg-linear-to-b from-[#e9ddd3] to-[#b59e8b]">
            <svg viewBox="0 0 12 12" className="size-[12px]" aria-hidden="true"><path d="M4 1.500h7v7H4z" fill="#fff" stroke="#555" /><path d="M1.500 3.500h7v7h-7z" fill="#fff" stroke="#555" /><path d="M4 6h2v2H4z" fill="#999" stroke="#555" /></svg>
          </button>
          <button type="button" aria-label="Close" className="flex w-[43px] items-center justify-center bg-linear-to-b from-[#e8a493] via-[#c8432a] to-[#cf5a3c]">
            <svg viewBox="0 0 12 12" className="size-[12px]" aria-hidden="true"><path d="M2.500 2.500l7 7M9.500 2.500l-7 7" stroke="#555" strokeWidth="4" /><path d="M2.500 2.500l7 7M9.500 2.500l-7 7" stroke="#fff" strokeWidth="2.500" /></svg>
          </button>
        </div>
      </header>

      {/* Menu bar */}
      <nav className="flex h-[22px] shrink-0 items-center border-b-[2px] border-[#cc0000] bg-[#efefef] pr-[5px] pl-[5px]">
        <ul className="flex flex-1 gap-[12px] font-['Open_Sans',sans-serif] text-[12px] leading-[18px] text-[#484848]">
          {menus.map(([m, u]) => (
            <li key={m}>
              <button type="button">
                {m.slice(0, u)}
                <span className="underline underline-offset-2">{m[u]}</span>
                {m.slice(u + 1)}
              </button>
            </li>
          ))}
        </ul>
        <svg viewBox="0 0 80 20" className="h-5 w-[80px]" aria-label="cadence" role="img">
          <text x="40" y="16" fontSize="19" fontWeight="700" fill="#262626" textAnchor="middle" fontFamily="Open Sans, sans-serif">cadence</text>
          <path d="M13 2.500h7" stroke="#e02020" strokeWidth="1.500" />
        </svg>
      </nav>

      {/* Toolbars */}
      <div className="flex h-[32px] shrink-0 border-b border-[#c4c4c4]">
        {row1.map((g, i) => (
          <ToolGroup key={i} group={g} first={i === 0} />
        ))}
      </div>
      <div className="flex h-[34px] shrink-0 pb-px">
        {row2.map((g, i) => (
          <ToolGroup key={i} group={g} first={i === 0} />
        ))}
      </div>

      <main className="flex min-h-0 flex-1">
        {/* Side toolbar */}
        <aside className="flex w-[45px] shrink-0 flex-col gap-px">
          {sideGroups.map((g, i) => (
            <div key={i} className={`${g.size} flex flex-col items-start bg-linear-to-r from-[#dedede] to-[#b9b9b9] pt-[2px] pl-[3px]`}>
              <span className={`${g.grip} mb-px h-[3px] shrink-0 bg-[repeating-linear-gradient(to_right,#3b9bf5_0,#3b9bf5_3px,transparent_3px,transparent_5px)]`} />
              <div className="flex flex-1 flex-col justify-around pb-[7px]">
                {g.items.map((name) => (
                  <button key={name} type="button" aria-label={name}>
                    {icons[name]}
                  </button>
                ))}
              </div>
            </div>
          ))}
        </aside>

        <div className="flex min-w-0 flex-1 flex-col">
          {/* Canvas */}
          <section className="relative min-h-0 flex-1 overflow-hidden border-2 border-t-[#777] border-r-[#bbb] border-b-[#bbb] border-l-[#777] bg-black">
            <Board2D />
          </section>

          {/* Command and overview */}
          <div className="mt-[6px] mb-[4px] flex h-[86px] shrink-0 gap-[6px]">
            <section className="flex min-w-0 flex-1 border border-t-[#777] border-r-[#ddd] border-b-[#888] border-l-[#777]">
              <SideStrip title="Command" />
              <div className="mb-[5px] flex flex-1 border-b border-l border-[#888] bg-white">
                <pre className="flex-1 pt-[2px] pl-px font-['Liberation_Sans',sans-serif] text-[10px] leading-[12px]">
                  {'last pick:  1.9099  3.3184\nNo element found.\nlast pick:  2.2911  3.3968\nNo element found.\nGrids are drawn 0.1024, 0.1024 apart for enhanced viewability.\nCommand >'}
                </pre>
                <div className="flex w-[16px] flex-col border-l border-[#888] bg-[#f6f6f6]">
                  <ScrollButton up />
                  <div className="flex flex-1 items-end">
                    <span className="h-[7px] w-full border-t border-b border-t-white border-b-[#777] bg-[#eee]" />
                  </div>
                  <ScrollButton up={false} />
                </div>
              </div>
            </section>
            <section className="flex w-[180px] shrink-0 border border-t-[#777] border-r-[#777] border-b-[#888] border-l-[#777]">
              <SideStrip title="WorldView" />
              <div className="my-[2px] mr-[1px] ml-[2px] flex-1 bg-black pt-[1px] pl-[4px]">
                <div className="h-[74px] w-[114px] border border-[#888]" />
              </div>
            </section>
          </div>
        </div>

        {/* Right column */}
        <aside className="ml-[6px] flex w-[243px] shrink-0">
          <div className="flex w-[212px] flex-col">
            <section className="h-[253px] shrink-0 border-l border-[#888] pl-px">
              <div className="border-r border-[#888]">
                <PanelTitle title="Find" buttons />
              </div>
              <fieldset className="mt-[7px] ml-[7px] w-[177px] border border-[#999] pb-0 pl-[6px]">
                <legend className="px-px leading-[12px]">Design Object Find Filter</legend>
                <div className="flex gap-[11px] pt-[4px]">
                  <button type="button" className={`${raised} h-[14px] w-[41px] text-center leading-[12px]`}>All On</button>
                  <button type="button" className={`${raised} h-[14px] w-[46px] text-center leading-[12px]`}>All Off</button>
                </div>
                <div className="grid h-[190px] grid-flow-col grid-cols-[79px_1fr] grid-rows-9 pt-[3px]">
                  {filters.map((f) => (
                    <label key={f.name} className={`flex items-center gap-[5px] ${f.disabled ? 'text-[#a5a5a5]' : ''}`}>
                      <Check label={f.name} on={f.on} disabled={f.disabled} />
                      {f.name}
                    </label>
                  ))}
                </div>
              </fieldset>
            </section>

            <section className="mt-[4px] flex min-h-0 flex-1 flex-col border-t border-l border-[#888] pl-px">
              <PanelTitle title="Visibility" />
              <div className="mt-[14px] flex h-[20px] items-center">
                <label htmlFor="views" className="w-[40px]">Views:</label>
                <div className="flex h-[19px] w-[140px] border-2 border-t-[#777] border-r-[#ccc] border-b-[#ccc] border-l-[#777] bg-white">
                  <select id="views" className="min-w-0 flex-1 appearance-none bg-white" defaultValue="">
                    <option value="" />
                  </select>
                  <span className={`${raised} pointer-events-none flex w-[15px] items-center justify-center bg-[#eee]`}>
                    <Tri d="M0.500 2h7L4 6z" />
                  </span>
                </div>
              </div>
              <table className="mt-[2px] w-[168px] shrink-0 table-fixed border-collapse">
                <Cols />
                <thead>
                  <tr className="h-[19px]">
                    <th className="p-0 text-left font-normal underline">Layer</th>
                    {kinds.map((k) => (
                      <th key={k} className="p-0 text-center font-normal whitespace-nowrap underline">{k}</th>
                    ))}
                  </tr>
                </thead>
                <tbody>
                  {['Conductors', 'Planes'].map((n) => (
                    <tr key={n} className="h-[21px]">
                      <th className="p-0 text-left font-normal">
                        <span className="flex items-center gap-[9px]">
                          {n}
                          {n === 'Planes' && <Check label="Planes" />}
                        </span>
                      </th>
                      {kinds.map((k) => (
                        <td key={k} className="p-0 text-center leading-[11px]"><Check label={`${n} ${k}`} /></td>
                      ))}
                    </tr>
                  ))}
                </tbody>
              </table>
              <div className="mt-[4px] flex min-h-0 flex-1 justify-between overflow-hidden border-t border-r-2 border-l border-[#777]">
                <table className="w-[168px] shrink-0 table-fixed border-collapse self-start">
                  <Cols />
                  <tbody>
                    {layers.map((l) => (
                      <tr key={l.name} className="h-[21px]">
                        <th className="p-0 text-left font-normal">{l.name}</th>
                        {kinds.map((k) => (
                          <td key={k} className="p-0">
                            <span className="flex justify-center">
                              {k === 'All' ? (
                                <Check label={`${l.name} all`} />
                              ) : (
                                <button type="button" aria-label={`${l.name} ${k}`} className={`${k === 'Drc' ? 'bg-[#ffc4fb]' : l.color} h-[12px] w-[11px] border-2 border-t-[#777] border-r-[#999] border-b-[#999] border-l-[#777]`} />
                              )}
                            </span>
                          </td>
                        ))}
                      </tr>
                    ))}
                  </tbody>
                </table>
                <div className="flex w-[16px] flex-col bg-[#f4f4f4]">
                  <ScrollButton up />
                  <div className="h-[60px] border-r border-b border-[#777] bg-[#eee]" />
                  <div className="flex-1" />
                  <ScrollButton up={false} />
                </div>
              </div>
            </section>
          </div>
          <button type="button" className="mt-[20px] ml-[10px] h-[59px] w-[18px] border border-r-0 border-[#8aa4c4] bg-[#f1f1f1] pb-[5px] text-center font-['Noto_Sans',sans-serif] text-[11px] leading-[16px] [writing-mode:vertical-rl]">
            Options
          </button>
        </aside>
      </main>

      {/* Status bar */}
      <footer className="flex h-[13px] shrink-0 border-t-2 border-[#888] text-center leading-[12px]">
        <span className="w-[341px] pl-[2px] text-left">Idle</span>
        <span className="w-[51px] border-r-2 border-l border-[#888] bg-[#00ff00]" />
        <span className="w-[126px] border-r border-[#888]" />
        <span className="w-[116px] border-r border-[#888]">All</span>
        <span className="flex-1 border-r border-[#888]">-0.8061, 4.3213</span>
        <span className="mr-[2px] w-[16px] border-r border-l border-[#888]">P</span>
        <span className="mr-[1px] w-[16px] border-r border-l border-[#888]">A</span>
        <span className="w-[98px] border-r border-l border-[#888]" />
        <span className="w-[40px] border-r border-[#888]" />
        <span className="w-[116px] border-r border-[#888]">General edit</span>
        <span className="w-[69px]">Off</span>
        <span className="w-[49px] bg-[#ff0000]">DRC</span>
        <span className="w-[42px]">0</span>
      </footer>

      {/* Network speed widget */}
      <div className="absolute top-[358px] right-[19px] flex h-[36px] w-[88px] items-center rounded-full border border-[#aaa] bg-linear-to-b from-[#fafafa] to-[#cfcfcf] font-['Open_Sans',sans-serif] text-[9px] shadow-[0_1px_3px_#0008]">
        <span className="ml-[1px] flex size-[32px] items-center justify-center rounded-full border border-[#2c7d22] bg-linear-to-b from-[#3f9a34] via-[#35a52c] to-[#5fd24a] text-[9px] font-semibold text-white">70%</span>
        <span className="ml-[3px] flex flex-1 flex-col gap-px pr-[9px]">
          <span className="flex items-center justify-between">
            <svg viewBox="0 0 6 8" className="h-2 w-[6px]" aria-hidden="true"><path d="M3 0l3 3H4v5H2V3H0z" fill="#e83a30" /></svg>
            0.4K/s
          </span>
          <span className="flex items-center justify-between">
            <svg viewBox="0 0 6 8" className="h-2 w-[6px]" aria-hidden="true"><path d="M3 8L0 5h2V0h2v5h2z" fill="#4ba83c" /></svg>
            3.9K/s
          </span>
        </span>
      </div>

      {/* Signatures */}
      <p className="pointer-events-none absolute right-[20px] bottom-[54px] font-['Liberation_Sans','Noto_Sans_CJK_SC',sans-serif] text-[25px] leading-[28px] whitespace-nowrap text-[#333]/80">by:樊渝江</p>
      <p className="pointer-events-none absolute right-[15px] bottom-[8px] font-['Liberation_Sans','Noto_Sans_CJK_SC',sans-serif] text-[24px] leading-[28px] whitespace-nowrap text-white [text-shadow:1px_1px_1px_#444,-1px_-1px_1px_#888]">
        头条号 / 卧龙会IT技术
      </p>
    </div>
  );
}
